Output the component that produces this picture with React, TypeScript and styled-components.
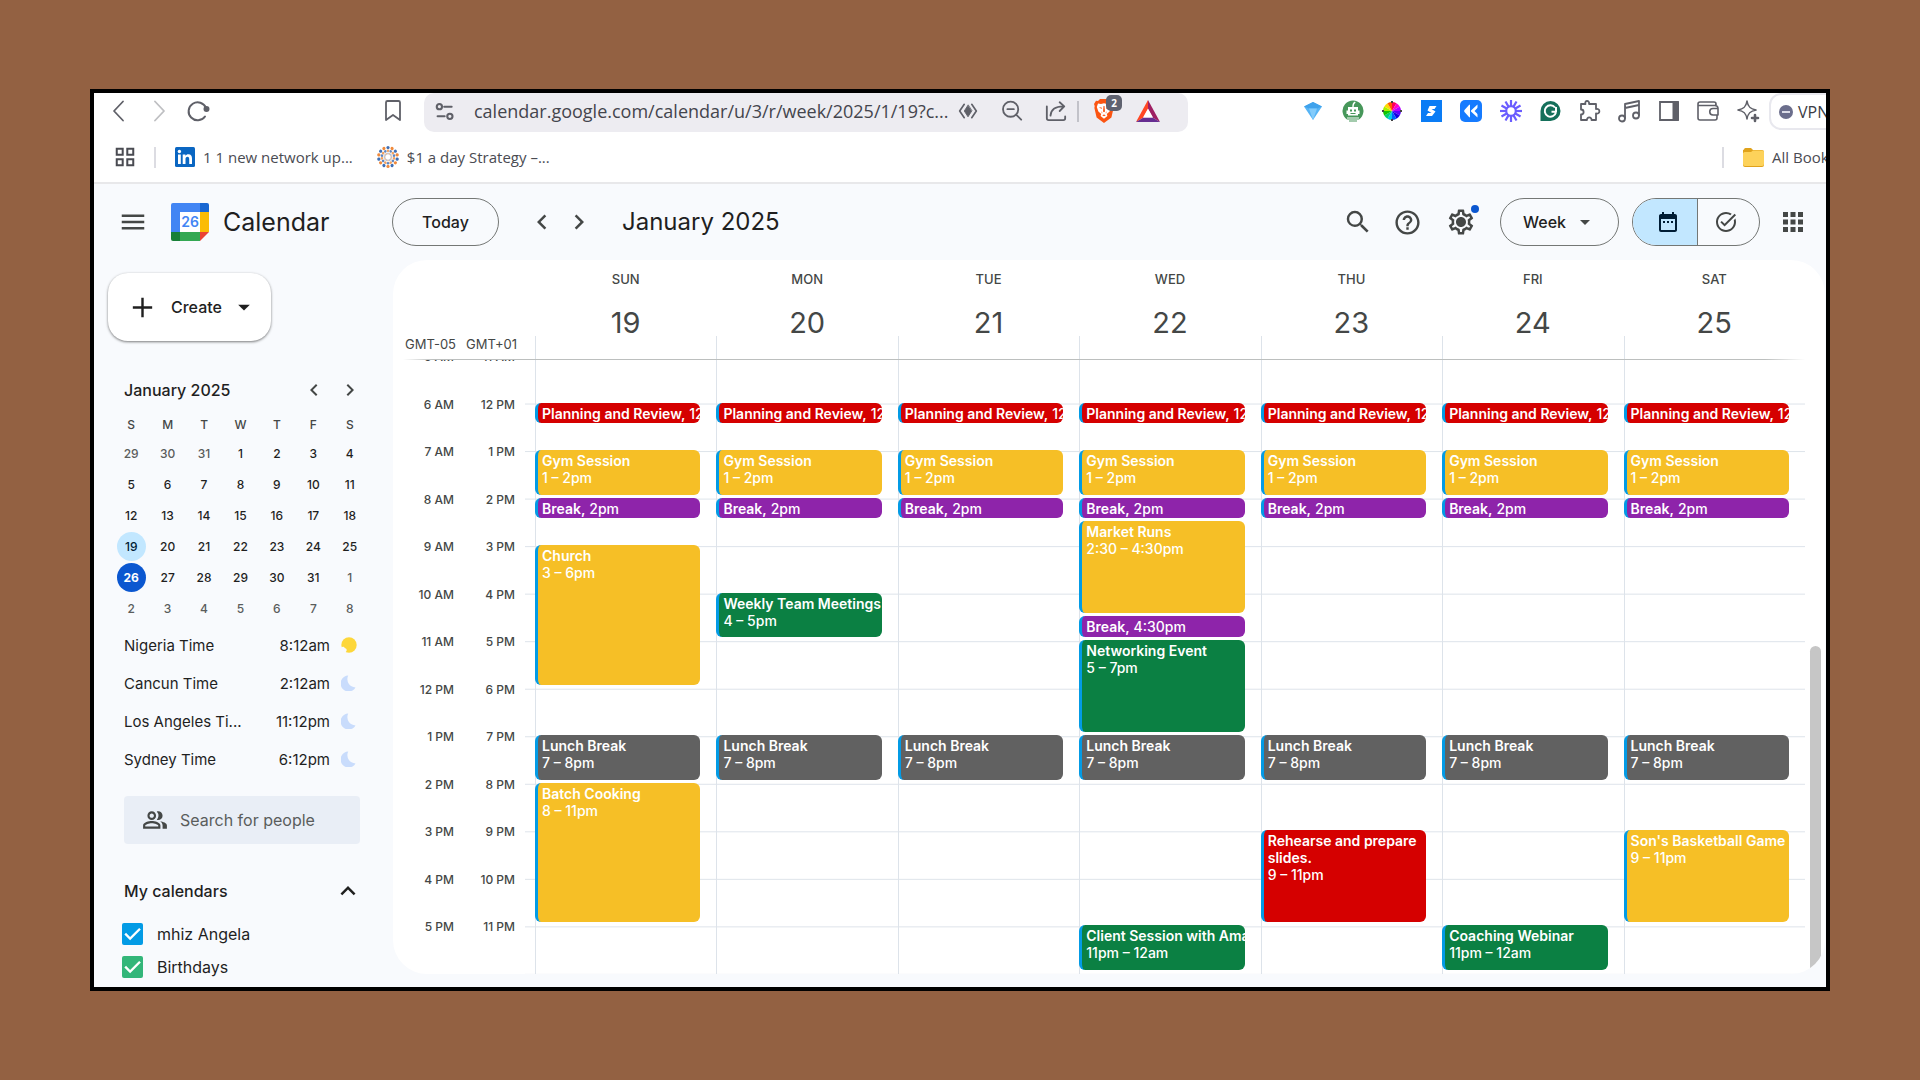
import React from "react";
import styled, { createGlobalStyle, css } from "styled-components";
import {
  MdApps,
  MdArrowDropDown,
  MdChevronLeft,
  MdChevronRight,
  MdDateRange,
  MdExpandLess,
  MdHelpOutline,
  MdMenu,
  MdOutlinePeopleAlt,
  MdOutlineSettings,
  MdSearch,
  MdTaskAlt,
} from "react-icons/md";

const GlobalStyle = createGlobalStyle`
  *, *::before, *::after { box-sizing: border-box; }
  body { margin: 0; background: #936142; }
  button, input, select { font: inherit; color: inherit; margin: 0; }
  button { padding: 0; border: 0; background: none; cursor: pointer; }
  svg { display: block; flex: none; }
`;

const uiFont = `Inter, "Liberation Sans", sans-serif`;
const chromeFont = `"Open Sans", "Noto Sans", sans-serif`;

/* ---------- frame ---------- */

const Stage = styled.div`
  display: flex;
  min-height: 100vh;
  padding: 89px 90px;
  background: #936142;
`;

const Frame = styled.div`
  display: flex;
  flex: 1;
  flex-direction: column;
  min-width: 0;
  overflow: hidden;
  border: 4px solid #000;
  background: #fff;
  color: #1f1f1f;
  font-family: ${uiFont};
`;

/* ---------- browser chrome ---------- */

const Toolbar = styled.div`
  display: flex;
  align-items: flex-start;
  height: 39px;
  color: #5f6068;
  font-family: ${chromeFont};
`;

const IconButton = styled.button<{ $faded?: boolean }>`
  display: grid;
  flex: none;
  place-items: center;
  width: 24px;
  height: 36px;
  opacity: ${(p) => (p.$faded ? 0.4 : 1)};
`;

const NavGroup = styled.div`
  display: flex;
  flex: none;
  gap: 16px;
  width: 287px;
  padding-left: 13px;
`;

const AddressBar = styled.div`
  display: flex;
  flex: 0 1 764px;
  align-items: flex-start;
  height: 39px;
  margin-left: 19px;
  padding: 0 28px 0 9px;
  border-radius: 10px;
  background: #edecf1;
`;

const AddressInput = styled.input`
  flex: 1;
  min-width: 0;
  height: 36px;
  padding: 0 0 0 17px;
  border: 0;
  outline: 0;
  background: none;
  color: #44454d;
  font-size: 18px;
`;

const AddressTools = styled.div`
  display: flex;
  align-items: center;
  gap: 20px;
`;

const BarDivider = styled.span<{ $tone: string }>`
  flex: none;
  width: 2px;
  height: 21px;
  background: ${(p) => p.$tone};
`;

const BraveTools = styled.div`
  display: flex;
  align-items: center;
  gap: 20px;
  margin-left: 9px;
  ${BarDivider} {
    margin-right: -7px;
  }
`;

const Badged = styled.span`
  position: relative;
`;

const CountBadge = styled.span`
  position: absolute;
  top: -4px;
  right: -8px;
  display: grid;
  place-items: center;
  width: 16px;
  height: 16px;
  border-radius: 5px;
  background: #5f6270;
  color: #fff;
  font-size: 10px;
  font-weight: 700;
  line-height: 16px;
`;

const Extensions = styled.div`
  display: flex;
  flex: none;
  justify-content: space-between;
  width: 459px;
  margin-left: auto;
`;

const VpnButton = styled.button`
  display: flex;
  flex: none;
  align-items: center;
  gap: 5px;
  width: 92px;
  height: 37px;
  margin: 0 -35px 0 9px;
  padding-left: 8px;
  border: 2px solid #e8e8ee;
  border-radius: 12px;
  color: #3b3c44;
  font-size: 16px;
`;

const Bookmarks = styled.nav`
  display: flex;
  align-items: center;
  height: 52px;
  padding-left: 20px;
  border-bottom: 2px solid #e8e8ea;
  color: #4a4b52;
  font-family: ${chromeFont};
  font-size: 15px;
  line-height: 20px;
`;

const BookmarkLink = styled.a`
  display: flex;
  flex: none;
  align-items: center;
  gap: 8px;
  margin-left: 19px;
  color: inherit;
  text-decoration: none;
  white-space: nowrap;
  & + & {
    margin-left: 24px;
  }
`;

const AppsButton = styled(IconButton)`
  width: 22px;
  margin-right: 18px;
`;

const BookmarkEnd = styled.div`
  display: flex;
  flex: none;
  align-items: center;
  width: 104px;
  margin-left: auto;
`;

/* ---------- calendar header ---------- */

const CalendarApp = styled.div`
  display: flex;
  flex: 1;
  flex-direction: column;
  background: #f8fafd;
`;

const Header = styled.header`
  display: flex;
  align-items: center;
  height: 76px;
  padding-right: 18px;
  color: #444746;
`;

const Brand = styled.div`
  display: flex;
  flex: none;
  align-items: center;
  width: 298px;
  padding-left: 24px;
`;

const RoundButton = styled.button`
  position: relative;
  display: grid;
  flex: none;
  place-items: center;
  width: 30px;
  height: 30px;
`;

const LogoMark = styled.span`
  margin: 0 14px 0 23px;
`;

const BrandName = styled.span`
  color: #1f1f1f;
  font-size: 25px;
  line-height: 32px;
`;

const pill = css`
  height: 48px;
  border: 1px solid #747775;
  border-radius: 24px;
  color: #1f1f1f;
  font-size: 16px;
  font-weight: 500;
`;

const TodayButton = styled.button`
  ${pill}
  flex: none;
  width: 107px;
  margin-right: 28px;
`;

const PeriodTitle = styled.h1`
  margin: 0 0 0 28px;
  color: #1f1f1f;
  font-size: 24px;
  font-weight: 400;
  line-height: 32px;
`;

const HeaderTools = styled.div`
  display: flex;
  align-items: center;
  gap: 24px;
  margin-left: auto;
`;

const ToolPair = styled.div<{ $gap: number }>`
  display: flex;
  align-items: center;
  gap: ${(p) => p.$gap}px;
`;

const NoticeDot = styled.span`
  position: absolute;
  top: -2px;
  right: -3px;
  width: 8px;
  height: 8px;
  border-radius: 50%;
  background: #0b57d0;
`;

const ViewPicker = styled.label`
  position: relative;
  flex: none;
  svg {
    position: absolute;
    top: 12px;
    right: 22px;
    pointer-events: none;
  }
`;

const ViewSelect = styled.select`
  ${pill}
  width: 119px;
  padding: 0 22px;
  background: none;
  appearance: none;
`;

const ModeSwitch = styled.div`
  ${pill}
  display: flex;
  flex: none;
  width: 128px;
  margin-right: 5px;
  overflow: hidden;
`;

const ModeButton = styled.button<{ $active?: boolean }>`
  display: grid;
  flex: 1 1 0;
  place-items: center;
  padding-left: 6px;
  background: ${(p) => (p.$active ? "#c2e7ff" : "transparent")};
  color: ${(p) => (p.$active ? "#001d35" : "#444746")};
  & + & {
    padding: 0 4px 0 0;
    border-left: 1px solid #747775;
  }
`;

/* ---------- sidebar ---------- */

const Main = styled.div`
  display: flex;
  flex: 1;
`;

const Sidebar = styled.aside`
  flex: none;
  width: 299px;
  padding: 13px 25px 0 19px;
`;

const CreateButton = styled.button`
  display: flex;
  align-items: center;
  width: 163px;
  height: 68px;
  margin-left: -5px;
  padding-left: 20px;
  border-radius: 20px;
  background: #fff;
  box-shadow: 0 1px 3px rgba(0, 0, 0, 0.4), 0 1px 2px rgba(0, 0, 0, 0.15);
  font-size: 16px;
  font-weight: 500;
  svg:first-child {
    margin-right: 14px;
  }
  svg:last-child {
    margin-left: 8px;
  }
`;

const MonthBar = styled.div`
  display: flex;
  align-items: center;
  height: 36px;
  margin-top: 31px;
  padding-left: 11px;
`;

const MonthName = styled.h2`
  flex: 1;
  margin: 0;
  font-size: 16px;
  font-weight: 500;
`;

const MonthStep = styled.button`
  display: grid;
  place-items: center;
  width: 36px;
  height: 36px;
  color: #444746;
`;

const MiniMonth = styled.table`
  width: 100%;
  margin-top: 2px;
  border-collapse: collapse;
  table-layout: fixed;
  font-size: 12px;
  font-weight: 500;
  text-align: center;
  th {
    height: 28px;
    padding: 0;
    color: #444746;
    font-weight: 500;
  }
  td {
    height: 31px;
    padding: 0;
  }
`;

const MiniDay = styled.button<{ $kind: "plain" | "muted" | "picked" | "today" }>`
  width: 29px;
  height: 29px;
  border-radius: 50%;
  vertical-align: middle;
  color: ${(p) => ({ plain: "#1f1f1f", muted: "#5a5d5c", picked: "#001d35", today: "#fff" })[p.$kind]};
  background: ${(p) => ({ plain: "none", muted: "none", picked: "#c2e7ff", today: "#0b57d0" })[p.$kind]};
  font-weight: ${(p) => (p.$kind === "today" ? 700 : 500)};
`;

const Clocks = styled.ul`
  margin: 2px 0 0;
  padding: 0 11px;
  list-style: none;
`;

const Clock = styled.li`
  display: flex;
  align-items: center;
  height: 38px;
  font-size: 15px;
  svg {
    margin-left: 11px;
  }
`;

const ClockName = styled.span`
  flex: none;
  width: 122px;
  overflow: hidden;
  text-overflow: ellipsis;
  white-space: nowrap;
`;

const ClockTime = styled.time`
  flex: 1;
  text-align: right;
`;

const PeopleSearch = styled.label`
  display: flex;
  align-items: center;
  gap: 12px;
  height: 48px;
  margin: 18px 8px 0 11px;
  padding-left: 18px;
  border-radius: 4px;
  background: #e9eef6;
  color: #444746;
`;

const PeopleInput = styled.input`
  flex: 1;
  min-width: 0;
  padding: 0;
  border: 0;
  outline: 0;
  background: none;
  font-size: 16px;
  &::placeholder {
    color: #5a5d5c;
    opacity: 1;
  }
`;

const SectionToggle = styled.button`
  display: flex;
  align-items: center;
  justify-content: space-between;
  width: 100%;
  height: 38px;
  margin: 28px 0 7px;
  padding: 0 5px 0 11px;
  font-size: 16px;
  font-weight: 500;
`;

const CalendarOption = styled.label`
  display: flex;
  align-items: center;
  gap: 14px;
  height: 33px;
  padding-left: 9px;
  font-size: 16px;
`;

const ColorCheck = styled.input<{ $color: string }>`
  display: grid;
  place-items: center;
  width: 21px;
  height: 22px;
  border-radius: 2px;
  background: ${(p) => p.$color};
  appearance: none;
  &:checked::after {
    content: "";
    width: 17px;
    height: 17px;
    background: #fff;
    clip-path: polygon(36% 70%, 12% 46%, 2% 56%, 36% 90%, 99% 27%, 89% 17%);
  }
`;

/* ---------- week card ---------- */

const WeekCard = styled.main`
  display: flex;
  flex: 1;
  flex-direction: column;
  min-width: 0;
  margin: 0 1px 13px 0;
  overflow: hidden;
  border-radius: 34px;
  background: #fff;
`;

const weekColumns = css`
  display: grid;
  grid-template-columns: 61px 61px 10px 1fr 20px;
`;

const WeekHead = styled.div`
  ${weekColumns}
  height: 99px;
`;

const ZoneName = styled.span`
  align-self: end;
  margin: 0 -2px 7px 0;
  color: #444746;
  font-size: 13px;
  line-height: 16px;
  text-align: right;
  white-space: nowrap;
`;

const DayHeads = styled.div`
  display: grid;
  grid-column: 4;
  grid-template-columns: repeat(7, 1fr);
  padding-left: 10px;
`;

const DayHead = styled.div`
  display: flex;
  flex-direction: column;
  align-items: center;
  padding-top: 9px;
  background: linear-gradient(#dde3ea, #dde3ea) 0 100% / 1px 23px no-repeat;
  color: #444746;
`;

const DayName = styled.span`
  font-size: 13px;
  font-weight: 500;
  line-height: 20px;
`;

const DayNumber = styled.span`
  margin-top: 14px;
  font-size: 29px;
  line-height: 40px;
`;

const HeadRule = styled.div`
  height: 1px;
  margin: 0 20px 0 10px;
  background: linear-gradient(90deg, transparent, #bcbfbe 30px, #bcbfbe calc(100% - 40px), transparent);
`;

const WeekBody = styled.div`
  display: flex;
  flex: 1;
  overflow: hidden;
`;

const HourGrid = styled.div`
  ${weekColumns}
  flex: 1;
  margin-top: -4px;
`;

const HourColumn = styled.div`
  display: grid;
  grid-template-rows: repeat(13, 1fr);
`;

const HourLabel = styled.span`
  height: 16px;
  margin-top: -7px;
  color: #444746;
  font-size: 12px;
  font-weight: 500;
  line-height: 16px;
  text-align: right;
`;

const Days = styled.div`
  display: grid;
  grid-column: 3 / 5;
  grid-template-columns: repeat(7, 1fr);
  margin-left: 10px;
  padding-left: 10px;
  background: linear-gradient(#dde3ea 1px, transparent 1px) 0 0 / 100% calc(100% / 13);
`;

const DayColumn = styled.div`
  display: grid;
  grid-template-rows: repeat(26, 1fr);
  min-width: 0;
  border-left: 1px solid #dde3ea;
`;

const EventBlock = styled.button<{ $color: string; $start: number; $span: number }>`
  grid-row: ${(p) => p.$start} / span ${(p) => p.$span};
  display: flex;
  flex-direction: column;
  align-items: stretch;
  justify-content: flex-start;
  min-width: 0;
  margin: -1px 16px 4px -1px;
  padding: 2px 0 0 4px;
  overflow: hidden;
  border-left: 3px solid #039be5;
  border-radius: 6px;
  background: ${(p) => p.$color};
  color: #fff;
  font-size: 14px;
  line-height: 17px;
  text-align: left;
`;

const EventTitle = styled.span<{ $wrap?: boolean }>`
  font-weight: 600;
  white-space: ${(p) => (p.$wrap ? "normal" : "nowrap")};
`;

const EventTime = styled.span`
  font-weight: 500;
  white-space: nowrap;
`;

const InlineEvent = styled.span`
  white-space: nowrap;
`;

const ScrollTrack = styled.div`
  display: flex;
  align-items: flex-end;
  padding-left: 5px;
`;

const ScrollThumb = styled.div`
  width: 11px;
  height: 53%;
  border-radius: 6px 6px 0 0;
  background: #c6c6c6;
`;

/* ---------- drawings ---------- */

type LineProps = { size?: number; width?: number; children: React.ReactNode };
const Line = ({ size = 24, width = 1.8, children }: LineProps) => (
  <svg width={size} height={size} viewBox="0 0 24 24" fill="none" stroke="currentColor" strokeWidth={width} strokeLinecap="round" strokeLinejoin="round" aria-hidden>
    {children}
  </svg>
);

const CalendarLogo = () => (
  <svg width="38" height="38" viewBox="0 0 38 38" aria-hidden>
    <path d="M2 0h27v9H9v20H0V2a2 2 0 0 1 2-2z" fill="#4285f4" />
    <path d="M29 0h7a2 2 0 0 1 2 2v7h-9z" fill="#1967d2" />
    <path d="M29 9h9v20h-9z" fill="#fbbc04" />
    <path d="M9 29h20v9H9z" fill="#34a853" />
    <path d="M0 29h9v9H2a2 2 0 0 1-2-2z" fill="#188038" />
    <path d="M29 29h9l-9 9z" fill="#ea4335" />
    <path d="M9 9h20v20H9z" fill="#fff" />
    <text x="19" y="24" textAnchor="middle" fontFamily="Inter, sans-serif" fontSize="14" fontWeight="600" fill="#4285f4">26</text>
  </svg>
);

const BraveLogo = () => (
  <svg width="20" height="24" viewBox="0 0 20 24" aria-hidden>
    <path d="M6 0h8l2 2 2-.3L20 5l-.7 2 .3 2-2.2 9.4L10 24l-7.400-5.600L.4 9l.3-2L0 5l2-3.300L4 2z" fill="#fb5412" />
    <path d="M4 4.500l3 .6 3-.8 3 .8 3-.6 1.200 3.500-1.600 4.400L12.800 15l.6 2-3.400 2.800L6.600 17l.6-2-2.800-2.600L2.800 8z" fill="#fff" />
    <path d="M4.800 8l3.200.8-.5 1.200zM15.200 8l-3.200.8.5 1.200zM9.500 7h1l.5 5.500-1 .8-1-.8zM7.200 12l1.300 2-.6.600zM12.800 12l-1.300 2 .6.600zM8.200 16.300L10 15.500l1.800.8-1.800.9z" fill="#fb5412" />
  </svg>
);

const BatLogo = () => (
  <svg width="24" height="22" viewBox="0 0 24 22" aria-hidden>
    <path d="M12 0L0 22l7.500-4.500L12 9z" fill="#ff4724" />
    <path d="M12 0l12 22-7.500-4.500L12 9z" fill="#9e1f63" />
    <path d="M0 22h24l-7.500-4.500h-9z" fill="#662d91" />
    <path d="M12 8.500l5 9H7z" fill="#fff" />
  </svg>
);

const Sketch = () => (
  <svg width="18" height="18" viewBox="0 0 18 18" aria-hidden>
    <path d="M0 4.500L9 0l9 4.500L9 18z" fill="#56b4f5" />
    <path d="M0 4.500L9 0l9 4.500-5 2H5z" fill="#3fa2ec" />
    <path d="M5 6.500h8L9 18z" fill="#82cbfb" />
  </svg>
);

const Robot = () => (
  <svg width="22" height="22" viewBox="0 0 22 22" aria-hidden>
    <path d="M5 19.500A10.500 10.500 0 1 1 17 19.500z" fill="#47975a" />
    <path d="M10.300 7c0-3 .7-4.500 2.700-5.500l.6 1.200C12.200 3.500 11.700 5 11.700 7zM6 7h10v3.500h1.500V14H16v1.500H6V14H4.500v-3.500H6z" fill="#fff" />
    <path d="M8 9.500h2v2H8zM12 9.500h2v2h-2zM8.500 13h5v1h-5z" fill="#47975a" />
    <path d="M5 17.500h12v1H5z" fill="#fff" />
    <path d="M7 20.500h8v1H7z" fill="#47975a" />
  </svg>
);

/* clockwise from twelve o'clock */
const wheelColors = ["#ff0055", "#ff00c8", "#b400ff", "#5a00ff", "#1200e0", "#0060ff", "#00c8e8", "#00d070", "#10c400", "#a8f000", "#ffd800", "#ff5a00"];
const wheelPoint = (step: number) => {
  const angle = (step * Math.PI) / 6;
  return `${10 + 9 * Math.sin(angle)} ${10 - 9 * Math.cos(angle)}`;
};
const ColorWheel = () => (
  <svg width="20" height="20" viewBox="0 0 20 20" aria-hidden>
    {wheelColors.map((color, i) => (
      <path key={color} d={`M10 10L${wheelPoint(i)}A9 9 0 0 1 ${wheelPoint(i + 1)}z`} fill={color} />
    ))}
    <path d="M9 0h2v2H9zM9 18h2v2H9zM0 9h2v2H0zM18 9h2v2h-2z" fill="#444" />
  </svg>
);

const BlueBolt = () => (
  <svg width="21" height="22" viewBox="0 0 21 22" aria-hidden>
    <path d="M0 0h21v22H0z" fill="#0a7cf5" />
    <path d="M8.500 6h7l-2 3H10.500l4 2.500-3.500 4.500H5l2-3h3.500L6.500 10.500z" fill="#fff" />
  </svg>
);

const Rewind = () => (
  <svg width="22" height="22" viewBox="0 0 22 22" aria-hidden>
    <rect width="22" height="22" rx="5" fill="#167bff" />
    <path d="M10 4.500v13a2 2 0 0 1-1-.5L4.500 12a1.600 1.600 0 0 1 0-2L9 5zM17.500 4.500v13L11 11.500v-1z" fill="#fff" />
    <path d="M14.500 11L18 7.500v7z" fill="#167bff" />
  </svg>
);

const Burst = () => (
  <svg width="22" height="22" viewBox="-11 -11 22 22" stroke="#6a5cff" strokeWidth="2.200" fill="none" aria-hidden>
    <circle r="4.800" />
    {Array.from({ length: 12 }, (_, i) => (
      <path key={i} d="M0-5V-11" transform={`rotate(${i * 30})`} />
    ))}
  </svg>
);

const Grammar = () => (
  <svg width="21" height="22" viewBox="0 0 21 22" aria-hidden>
    <path d="M10.500 1A10 10 0 1 1 10.500 21H0.500V11A10 10 0 0 1 10.500 1z" fill="#15705b" />
    <path d="M15 7.500A5.700 5.700 0 1 0 16 12.300M16.500 11.800H11.500M16 12V7" fill="none" stroke="#fff" strokeWidth="2" />
  </svg>
);

const DotFlower = () => (
  <svg width="22" height="22" viewBox="-11 -11 22 22" aria-hidden>
    {Array.from({ length: 14 }, (_, i) => (
      <g key={i} transform={`rotate(${(i * 360) / 14})`}>
        <circle cy="-9.400" r="1.600" fill={i % 2 ? "#f08a3c" : "#3f6fb5"} />
        <circle cy="-6.200" r="1.300" fill={i % 2 ? "#5f86bf" : "#f2a05f"} />
        <circle cy="-3.500" r="1" fill={i % 2 ? "#e9c3a5" : "#b9c3d6"} />
      </g>
    ))}
  </svg>
);

const LinkedIn = () => (
  <svg width="20" height="20" viewBox="0 0 20 20" aria-hidden>
    <rect width="20" height="20" rx="1.500" fill="#0a66c2" />
    <path d="M3 7.500h2.800V17H3zM7.700 7.500h2.700v1.300c.6-1 1.600-1.600 3-1.600 2.700 0 3.600 1.700 3.600 4.400V17h-2.800v-4.900c0-1.400-.4-2.400-1.700-2.400-1.300 0-2 .9-2 2.400V17H7.700z" fill="#fff" />
    <circle cx="4.400" cy="4.500" r="1.700" fill="#fff" />
  </svg>
);

const Folder = () => (
  <svg width="21" height="19" viewBox="0 0 21 19" aria-hidden>
    <path d="M1 1.500A1.500 1.500 0 0 1 2.500 0H8l2 2h9a2 2 0 0 1 2 2v13a2 2 0 0 1-2 2H2a2 2 0 0 1-2-2V2z" fill="#e0a21b" />
    <path d="M0 5l1.500-1H8l2-1.500h9.500A1.500 1.500 0 0 1 21 4v12a2 2 0 0 1-2 2H2a2 2 0 0 1-2-2z" fill="#fdd25a" />
  </svg>
);

const Gear = () => (
  <svg width="30" height="30" viewBox="0 0 24 24" fill="currentColor" aria-hidden>
    <MdOutlineSettings size={24} />
    <circle cx="12" cy="12" r="3.300" />
  </svg>
);

const Sun = () => (
  <svg width="16" height="16" viewBox="0 0 16 16" aria-hidden>
    <circle cx="8" cy="8" r="7.700" fill="#fdd73b" />
    <path d="M0 10.500c2-1.500 3.500-.5 4 .8 1.500.2 2 1.500 1.500 2.700L4 16H0z" fill="#f8fafd" />
  </svg>
);

const Moon = () => (
  <svg width="16" height="16" viewBox="0 0 16 16" aria-hidden>
    <path d="M7.200.5A8.400 8.400 0 0 0 14.500 12.500 8 8 0 1 1 7.200.5z" fill="#c9dcfc" />
  </svg>
);

const extensionIcons: [string, React.ReactNode][] = [
  ["Sketch", <Sketch />],
  ["Bot", <Robot />],
  ["Color picker", <ColorWheel />],
  ["Quick actions", <BlueBolt />],
  ["Rewind", <Rewind />],
  ["Recorder", <Burst />],
  ["Writing assistant", <Grammar />],
  ["Extensions", <Line><path d="M3 5h4.500C6 1 12 1 11 5h7v5c4.500-1 4.500 5.500 0 4.500V21h-4.500c.5-3.500-5-3.500-4.500 0H3v-5.500c3.500 0 3.500-5 0-5z" /></Line>],
  ["Media", <Line><path d="M8 19V5l14-3v14M8 9l14-3" /><circle cx="5" cy="19.500" r="3" /><circle cx="19" cy="16.500" r="3" /></Line>],
  ["Side panel", <svg width="22" height="22" viewBox="0 0 22 22" aria-hidden><path d="M2 2h18v18H2z" fill="none" stroke="currentColor" strokeWidth="1.800" /><path d="M14.500 2H21v18h-6.500z" fill="currentColor" /></svg>],
  ["Wallet", <Line width={1.6}><path d="M20 7V5a2 2 0 0 0-2-2H4a2 2 0 0 0-2 2v14a2 2 0 0 0 2 2h15a2 2 0 0 0 2-2v-3M2 6.500h17a3 3 0 0 1 3 3V16h-5a3.200 3.200 0 0 1 0-6.500h5" /></Line>],
  ["Assistant", <Line width={1.6}><path d="M11 2c.8 5.500 3 8 9 9-6 1-8.200 3.500-9 9-.8-5.500-3-8-9-9 6-1 8.200-3.500 9-9z" /><path d="M19 16v6M16 19h6" strokeWidth="2.600" /></Line>],
];

/* ---------- data ---------- */

const dayNames = ["SUN", "MON", "TUE", "WED", "THU", "FRI", "SAT"];
const leftHours = ["5 AM", "6 AM", "7 AM", "8 AM", "9 AM", "10 AM", "11 AM", "12 PM", "1 PM", "2 PM", "3 PM", "4 PM", "5 PM"];
const rightHours = ["11 AM", "12 PM", "1 PM", "2 PM", "3 PM", "4 PM", "5 PM", "6 PM", "7 PM", "8 PM", "9 PM", "10 PM", "11 PM"];

const palette = { red: "#d50000", yellow: "#f6bf26", purple: "#8e24aa", green: "#0b8043", gray: "#616161" };

/** `at` is the start hour and `hours` the length, on the GMT+01 clock. */
type CalEvent = { title: string; time: string; at: number; hours: number; color: keyof typeof palette };

const daily: CalEvent[] = [
  { title: "Planning and Review,", time: "12pm", at: 12, hours: 0.5, color: "red" },
  { title: "Gym Session", time: "1 – 2pm", at: 13, hours: 1, color: "yellow" },
  { title: "Break,", time: "2pm", at: 14, hours: 0.5, color: "purple" },
  { title: "Lunch Break", time: "7 – 8pm", at: 19, hours: 1, color: "gray" },
];

const extra: Record<string, CalEvent[]> = {
  SUN: [
    { title: "Church", time: "3 – 6pm", at: 15, hours: 3, color: "yellow" },
    { title: "Batch Cooking", time: "8 – 11pm", at: 20, hours: 3, color: "yellow" },
  ],
  MON: [{ title: "Weekly Team Meetings", time: "4 – 5pm", at: 16, hours: 1, color: "green" }],
  WED: [
    { title: "Market Runs", time: "2:30 – 4:30pm", at: 14.5, hours: 2, color: "yellow" },
    { title: "Break,", time: "4:30pm", at: 16.5, hours: 0.5, color: "purple" },
    { title: "Networking Event", time: "5 – 7pm", at: 17, hours: 2, color: "green" },
    { title: "Client Session with Amanda", time: "11pm – 12am", at: 23, hours: 1, color: "green" },
  ],
  THU: [{ title: "Rehearse and prepare slides.", time: "9 – 11pm", at: 21, hours: 2, color: "red" }],
  FRI: [{ title: "Coaching Webinar", time: "11pm – 12am", at: 23, hours: 1, color: "green" }],
  SAT: [{ title: "Son's Basketball Game", time: "9 – 11pm", at: 21, hours: 2, color: "yellow" }],
};

const eventsFor = (day: string) => [...daily, ...(extra[day] ?? [])].sort((a, b) => a.at - b.at);

const miniWeeks = [
  [29, 30, 31, 1, 2, 3, 4],
  [5, 6, 7, 8, 9, 10, 11],
  [12, 13, 14, 15, 16, 17, 18],
  [19, 20, 21, 22, 23, 24, 25],
  [26, 27, 28, 29, 30, 31, 1],
  [2, 3, 4, 5, 6, 7, 8],
];

const miniKind = (week: number, day: number) => {
  if ((week === 0 && day > 20) || (week > 3 && day < 20)) return "muted";
  if (day === 19) return "picked";
  return day === 26 ? "today" : "plain";
};

const clocks: [string, string, boolean][] = [
  ["Nigeria Time", "8:12am", true],
  ["Cancun Time", "2:12am", false],
  ["Los Angeles Ti...", "11:12pm", false],
  ["Sydney Time", "6:12pm", false],
];

/* ---------- sections ---------- */

const BrowserChrome = () => (
  <>
    <Toolbar>
      <NavGroup>
        <IconButton aria-label="Back"><Line><path d="M16 2.500L7 12l9 9.500" /></Line></IconButton>
        <IconButton aria-label="Forward" $faded><Line><path d="M8 2.500L17 12l-9 9.500" /></Line></IconButton>
        <IconButton aria-label="Reload">
          <Line width={2}><path d="M18 17.500A9 9 0 1 1 19 9" /><circle cx="19.500" cy="10" r="2" fill="currentColor" /></Line>
        </IconButton>
      </NavGroup>
      <IconButton aria-label="Bookmark this page"><Line><path d="M5 3.500A1.500 1.500 0 0 1 6.500 2h11A1.500 1.500 0 0 1 19 3.500V21l-7-5-7 5z" /></Line></IconButton>
      <AddressBar>
        <IconButton aria-label="Site information">
          <Line size={21} width={2.4}><circle cx="5" cy="6.500" r="3" /><path d="M10.500 6.500H19M3 17.500h8" /><circle cx="17" cy="17.500" r="3" /></Line>
        </IconButton>
        <AddressInput aria-label="Address" defaultValue="calendar.google.com/calendar/u/3/r/week/2025/1/19?c..." />
        <AddressTools>
          <IconButton aria-label="Reader">
            <Line size={20} width={2}><path d="M7.500 4L2 12l5.500 8M16.500 4L22 12l-5.500 8" /><path d="M12 5l-4.500 7 4.500 7 4.500-7z" fill="currentColor" strokeWidth="1" /></Line>
          </IconButton>
          <IconButton aria-label="Zoom"><Line size={22} width={2}><circle cx="10.500" cy="10" r="8.300" /><path d="M16.500 16l5.500 5.500M7 10h7" /></Line></IconButton>
          <IconButton aria-label="Share"><Line size={22} width={2}><path d="M2 7v13a2 2 0 0 0 2 2h16a2 2 0 0 0 2-2v-2M6 17C6.500 10.500 11 7 20 7M16 2.500L21 7l-5 5" /></Line></IconButton>
        </AddressTools>
        <BraveTools>
          <BarDivider $tone="#c2c2c9" />
          <IconButton aria-label="Brave Shields"><Badged><BraveLogo /><CountBadge>2</CountBadge></Badged></IconButton>
          <IconButton aria-label="Brave Rewards"><BatLogo /></IconButton>
        </BraveTools>
      </AddressBar>
      <Extensions>
        {extensionIcons.map(([name, icon]) => (
          <IconButton key={name} aria-label={name}>{icon}</IconButton>
        ))}
      </Extensions>
      <VpnButton>
        <svg width="14" height="14" viewBox="0 0 14 14" aria-hidden><circle cx="7" cy="7" r="7" fill="#6b6e8c" /><path d="M3 6h8v2H3z" fill="#dcdde8" /></svg>
        VPN
      </VpnButton>
    </Toolbar>
    <Bookmarks aria-label="Bookmarks">
      <AppsButton aria-label="Apps">
        <Line size={22} width={2.2}><path d="M3 3h6.500v6.500H3zM14.500 3H21v6.500h-6.500zM3 14.500h6.500V21H3zM14.500 14.500H21V21h-6.500z" strokeLinejoin="miter" /></Line>
      </AppsButton>
      <BarDivider $tone="#dcdce2" />
      <BookmarkLink href="#linkedin"><LinkedIn />1 1 new network up...</BookmarkLink>
      <BookmarkLink href="#strategy"><DotFlower />$1 a day Strategy –...</BookmarkLink>
      <BookmarkEnd>
        <BarDivider $tone="#dcdce2" />
        <BookmarkLink href="#all"><Folder />All Bookmarks</BookmarkLink>
      </BookmarkEnd>
    </Bookmarks>
  </>
);

const CalendarHeader = () => (
  <Header>
    <Brand>
      <RoundButton aria-label="Main menu"><MdMenu size={30} /></RoundButton>
      <LogoMark><CalendarLogo /></LogoMark>
      <BrandName>Calendar</BrandName>
    </Brand>
    <TodayButton>Today</TodayButton>
    <ToolPair $gap={7}>
      <RoundButton aria-label="Previous week"><MdChevronLeft size={30} /></RoundButton>
      <RoundButton aria-label="Next week"><MdChevronRight size={30} /></RoundButton>
    </ToolPair>
    <PeriodTitle>January 2025</PeriodTitle>
    <HeaderTools>
      <ToolPair $gap={19}>
        <RoundButton aria-label="Search"><MdSearch size={30} /></RoundButton>
        <RoundButton aria-label="Support"><MdHelpOutline size={29} /></RoundButton>
      </ToolPair>
      <RoundButton aria-label="Settings"><Gear /><NoticeDot /></RoundButton>
      <ToolPair $gap={13}>
        <ViewPicker>
          <ViewSelect aria-label="View" defaultValue="Week">
            <option>Day</option>
            <option>Week</option>
            <option>Month</option>
          </ViewSelect>
          <MdArrowDropDown size={24} />
        </ViewPicker>
        <ModeSwitch>
          <ModeButton $active aria-label="Calendar view"><MdDateRange size={24} /></ModeButton>
          <ModeButton aria-label="Tasks view"><MdTaskAlt size={24} /></ModeButton>
        </ModeSwitch>
        <RoundButton aria-label="Google apps"><MdApps size={30} /></RoundButton>
      </ToolPair>
    </HeaderTools>
  </Header>
);

const SidePanel = () => (
  <Sidebar>
    <CreateButton>
      <Line size={29} width={2}><path d="M12 4v16M4 12h16" strokeLinecap="butt" /></Line>
      Create
      <MdArrowDropDown size={28} />
    </CreateButton>
    <MonthBar>
      <MonthName>January 2025</MonthName>
      <MonthStep aria-label="Previous month"><MdChevronLeft size={24} /></MonthStep>
      <MonthStep aria-label="Next month"><MdChevronRight size={24} /></MonthStep>
    </MonthBar>
    <MiniMonth>
      <thead>
        <tr>{["S", "M", "T", "W", "T", "F", "S"].map((d, i) => <th key={i} scope="col">{d}</th>)}</tr>
      </thead>
      <tbody>
        {miniWeeks.map((week, w) => (
          <tr key={w}>
            {week.map((d) => (
              <td key={d}><MiniDay $kind={miniKind(w, d)}>{d}</MiniDay></td>
            ))}
          </tr>
        ))}
      </tbody>
    </MiniMonth>
    <Clocks>
      {clocks.map(([name, time, day]) => (
        <Clock key={name}>
          <ClockName>{name}</ClockName>
          <ClockTime>{time}</ClockTime>
          {day ? <Sun /> : <Moon />}
        </Clock>
      ))}
    </Clocks>
    <PeopleSearch>
      <MdOutlinePeopleAlt size={26} />
      <PeopleInput aria-label="Search for people" placeholder="Search for people" />
    </PeopleSearch>
    <SectionToggle aria-expanded>
      My calendars
      <MdExpandLess size={30} />
    </SectionToggle>
    <CalendarOption><ColorCheck type="checkbox" defaultChecked $color="#039be5" />mhiz Angela</CalendarOption>
    <CalendarOption><ColorCheck type="checkbox" defaultChecked $color="#33b679" />Birthdays</CalendarOption>
  </Sidebar>
);

const EventItem = ({ event }: { event: CalEvent }) => (
  <EventBlock $color={palette[event.color]} $start={(event.at - 11) * 2 + 1} $span={event.hours * 2}>
    {event.hours < 1 ? (
      <InlineEvent><EventTitle>{event.title}</EventTitle> <EventTime>{event.time}</EventTime></InlineEvent>
    ) : (
      <>
        <EventTitle $wrap={event.hours > 1}>{event.title}</EventTitle>
        <EventTime>{event.time}</EventTime>
      </>
    )}
  </EventBlock>
);

const Week = () => (
  <WeekCard>
    <WeekHead>
      <ZoneName>GMT-05</ZoneName>
      <ZoneName>GMT+01</ZoneName>
      <DayHeads>
        {dayNames.map((name, i) => (
          <DayHead key={name}>
            <DayName>{name}</DayName>
            <DayNumber>{19 + i}</DayNumber>
          </DayHead>
        ))}
      </DayHeads>
    </WeekHead>
    <HeadRule />
    <WeekBody>
      <HourGrid>
        <HourColumn>{leftHours.map((h) => <HourLabel key={h}>{h}</HourLabel>)}</HourColumn>
        <HourColumn>{rightHours.map((h) => <HourLabel key={h}>{h}</HourLabel>)}</HourColumn>
        <Days>
          {dayNames.map((name) => (
            <DayColumn key={name}>
              {eventsFor(name).map((e) => <EventItem key={e.title + e.at} event={e} />)}
            </DayColumn>
          ))}
        </Days>
        <ScrollTrack><ScrollThumb /></ScrollTrack>
      </HourGrid>
    </WeekBody>
  </WeekCard>
);

export default function App() {
  return (
    <Stage>
      <GlobalStyle />
      <Frame>
        <BrowserChrome />
        <CalendarApp>
          <CalendarHeader />
          <Main>
            <SidePanel />
            <Week />
          </Main>
        </CalendarApp>
      </Frame>
    </Stage>
  );
}
